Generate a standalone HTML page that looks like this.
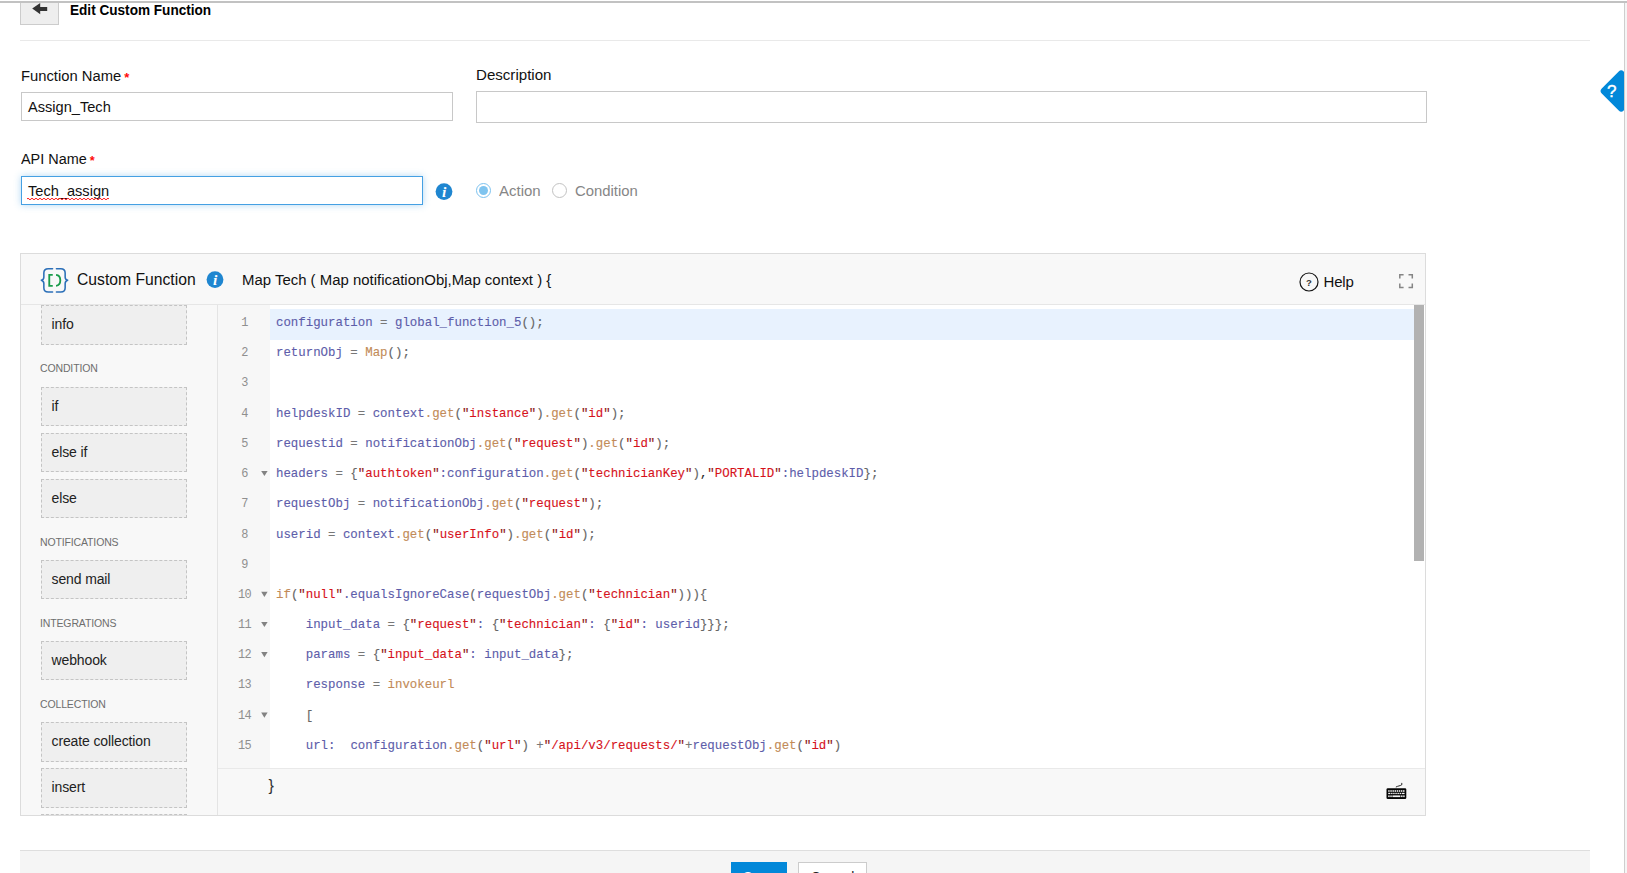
<!DOCTYPE html>
<html lang="en">
<head>
<meta charset="utf-8">
<title>Edit Custom Function</title>
<style>
*{box-sizing:border-box;margin:0;padding:0}
html,body{width:1627px;height:873px;overflow:hidden;background:#fff}
body{position:relative;font-family:"Liberation Sans",Arial,sans-serif;color:#111;font-size:15px}
.abs{position:absolute}
.t{position:absolute;white-space:pre;line-height:20px}
/* top */
#topline{left:0;top:1px;width:1627px;height:2px;background:#c2c2c2;z-index:9}
#rightline{left:1624px;top:3px;width:1px;height:870px;background:#cecece}
#rightline2{left:1625px;top:3px;width:2px;height:870px;background:#f5f5f5}
#back{left:20px;top:1px;width:39px;height:24px;background:#eee;border:1px solid #ccc;overflow:hidden}
#hdiv{left:20px;top:40px;width:1570px;height:1px;background:#e9e9e9}
#title{left:70px;top:0px;font-weight:bold;font-size:15px;letter-spacing:0;color:#000;transform:scaleX(.906);transform-origin:0 50%}
.lbl{font-size:15.3px;letter-spacing:0;color:#111;transform-origin:0 50%}
.req{color:#ff0a0a;font-size:13.5px;font-weight:bold}
.inp{position:absolute;background:#fff;border:1px solid #c8c8c8}
.inp span{position:absolute;left:6px;white-space:pre;font-size:14.6px;line-height:20px;color:#111}
/* panel */
#panel{left:20px;top:253px;width:1406px;height:563px;background:#f8f8f8;border:1px solid #dcdcdc;overflow:hidden}
#phead{left:0;top:0;width:1404px;height:51px;border-bottom:1px solid #e6e6e6;background:#f8f8f8;z-index:5}
#side{left:0;top:51px;width:197px;height:511px;border-right:1px solid #e4e4e4;overflow:hidden}
.blk{position:absolute;left:20px;width:146px;height:39px;background:#efefef;border:1px dashed #c4c4c4;font-size:14px;line-height:36px;padding-left:9.5px;letter-spacing:-0.12px;color:#222;white-space:pre}
.hd{position:absolute;left:19px;font-size:10.5px;line-height:12px;color:#6e6e6e;white-space:pre;letter-spacing:-0.14px}
#gutter{left:197px;top:51px;width:52px;height:463px;background:#f7f7f7}
#code{left:249px;top:51px;width:1144px;height:463px;background:#fff;overflow:hidden}
#vsb{left:1393px;top:51px;width:11px;height:463px;background:#fff}
#thumb{left:0;top:0;width:10px;height:256px;background:#b2b2b2}
#foot{left:197px;top:514px;width:1207px;height:48px;border-top:1px solid #e9e9e9;background:#f8f8f8}
.ln{position:absolute;left:0;width:53px;text-align:center;font-family:"Liberation Mono",monospace;font-size:11.9px;letter-spacing:-0.55px;line-height:30px;height:30px;color:#8f8f8f}
.fold{position:absolute;left:44px;width:0;height:0;border-left:3px solid transparent;border-right:3px solid transparent;border-top:5px solid #8a8a8a}
.cl{position:absolute;left:6px;height:30px;line-height:30px;font-family:"Liberation Mono",monospace;font-size:12.4px;white-space:pre;color:#666;letter-spacing:0;-webkit-text-stroke:0.12px currentColor}
.v{color:#5d5daa}.k{color:#c28b58}.s{color:#d6121b}.q{color:#8e1414}.o{color:#777}.p{color:#666}
#hl{left:0;top:4px;width:1144px;height:30.8px;background:#e8f2fe}
/* bottom bar */
#bbar{left:20px;top:850px;width:1570px;height:23px;background:#f5f5f5;border-top:1px solid #dedede}
#save{left:731px;top:862px;width:56px;height:30px;background:#0288d9;color:#fff;font-size:14px;text-align:center;line-height:31px}
#cancel{left:798px;top:862px;width:69px;height:30px;background:#fff;border:1px solid #ccc;color:#222;font-size:14px;text-align:center;line-height:29px}
</style>
</head>
<body>
<div class="abs" id="topline"></div>
<div class="abs" id="rightline"></div>
<div class="abs" id="rightline2"></div>

<div class="abs" id="back">
<svg class="abs" style="left:0;top:-3px" width="39" height="27" viewBox="0 0 39 27"><polygon points="11.2,9.6 19.2,4 19.2,8 26.2,8 26.2,11.9 19.2,11.9 19.2,15.3" fill="#333"/></svg>
</div>
<div class="t" id="title">Edit Custom Function</div>
<div class="abs" id="hdiv"></div>

<!-- help tab -->
<svg class="abs" style="left:1595px;top:64px" width="29" height="54" viewBox="0 0 29 54"><rect x="10.7" y="11.5" width="31" height="31" rx="3.5" fill="#0288d9" transform="rotate(45 26.2 27)"/><text x="16.8" y="33.4" font-family="Liberation Sans, Arial, sans-serif" font-size="17" fill="#fff" stroke="#fff" stroke-width="0.4" text-anchor="middle">?</text></svg>

<!-- form -->
<div class="t lbl" style="left:20.5px;top:66px;transform:scaleX(.9655)">Function Name <span class="req" style="position:relative;top:1px;left:-1px">*</span></div>
<div class="inp" style="left:21px;top:92px;width:432px;height:29px"><span style="top:4px">Assign_Tech</span></div>
<div class="t lbl" style="left:476.3px;top:65px;transform:scaleX(.986)">Description</div>
<div class="inp" style="left:476px;top:91px;width:951px;height:32px"></div>

<div class="t lbl" style="left:20.5px;top:149px;transform:scaleX(.943)">API Name <span class="req" style="position:relative;top:1px;left:-1px">*</span></div>
<div class="inp" style="left:21px;top:176px;width:402px;height:29px;border-color:#45a0e3;box-shadow:0 0 7px rgba(70,160,227,.42)"><span style="top:4px">Tech_assign</span><svg class="abs" style="left:5px;top:20px" width="84" height="4" viewBox="0 0 84 4"><path d="M0 1.3 Q1 -0.3 2 1.3 T4 1.3 T6 1.3 T8 1.3 T10 1.3 T12 1.3 T14 1.3 T16 1.3 T18 1.3 T20 1.3 T22 1.3 T24 1.3 T26 1.3 T28 1.3 T30 1.3 T32 1.3 T34 1.3 T36 1.3 T38 1.3 T40 1.3 T42 1.3 T44 1.3 T46 1.3 T48 1.3 T50 1.3 T52 1.3 T54 1.3 T56 1.3 T58 1.3 T60 1.3 T62 1.3 T64 1.3 T66 1.3 T68 1.3 T70 1.3 T72 1.3 T74 1.3 T76 1.3 T78 1.3 T80 1.3 T82 1.3" transform="translate(0,0.7)" fill="none" stroke="#ff1a1a" stroke-width="1"/></svg></div>

<svg class="abs" style="left:435.4px;top:182.4px" width="18" height="19" viewBox="0 0 18 19"><circle cx="9" cy="9.6" r="8.4" fill="#1f86d0"/><text x="9.1" y="14.9" font-family="Liberation Serif, serif" font-style="italic" font-weight="bold" font-size="15.5" fill="#fff" text-anchor="middle">i</text></svg>

<div class="abs" style="left:476px;top:183px;width:15px;height:15px;border-radius:50%;border:1.2px solid #7cc2ef;background:#fff"></div>
<div class="abs" style="left:479px;top:186px;width:9px;height:9px;border-radius:50%;background:#7fc4ef"></div>
<div class="t" style="left:499.2px;top:181px;font-size:15.3px;color:#868686;transform:scaleX(.98);transform-origin:0 50%">Action</div>
<div class="abs" style="left:552px;top:183px;width:15px;height:15px;border-radius:50%;border:1px solid #c2c2c2;background:#fff"></div>
<div class="t" style="left:575.2px;top:181px;font-size:15.3px;color:#868686;transform:scaleX(.972);transform-origin:0 50%">Condition</div>

<!-- editor panel -->
<div class="abs" id="panel">
  <div class="abs" id="side">
    <div class="blk" style="top:0px;height:40px">info</div>
    <div class="blk" style="top:82px;height:39px">if</div>
    <div class="blk" style="top:128px;height:39px">else if</div>
    <div class="blk" style="top:174px;height:39px">else</div>
    <div class="blk" style="top:255px;height:39px">send mail</div>
    <div class="blk" style="top:336px;height:39px">webhook</div>
    <div class="blk" style="top:417px;height:40px">create collection</div>
    <div class="blk" style="top:463px;height:40px">insert</div>
    <div class="blk" style="top:509px;height:40px">get</div>
    <div class="hd" style="top:57px">CONDITION</div>
    <div class="hd" style="top:231px">NOTIFICATIONS</div>
    <div class="hd" style="top:312px">INTEGRATIONS</div>
    <div class="hd" style="top:393px">COLLECTION</div>
  </div>
  <div class="abs" id="gutter">
    <div class="ln" style="top:3px">1</div>
    <div class="ln" style="top:33px">2</div>
    <div class="ln" style="top:63px">3</div>
    <div class="ln" style="top:94px">4</div>
    <div class="ln" style="top:124px">5</div>
    <div class="ln" style="top:154px">6</div>
    <div class="ln" style="top:184px">7</div>
    <div class="ln" style="top:215px">8</div>
    <div class="ln" style="top:245px">9</div>
    <div class="ln" style="top:275px">10</div>
    <div class="ln" style="top:305px">11</div>
    <div class="ln" style="top:335px">12</div>
    <div class="ln" style="top:365px">13</div>
    <div class="ln" style="top:396px">14</div>
    <div class="ln" style="top:426px">15</div>
    <div class="ln" style="top:456px">16</div>
  <svg class="abs" style="left:0;top:0" width="52" height="463" viewBox="0 0 52 463" fill="#828282"><polygon points="43.2,165.9 49.6,165.9 46.4,171.1"/><polygon points="43.2,286.7 49.6,286.7 46.4,291.9"/><polygon points="43.2,316.9 49.6,316.9 46.4,322.1"/><polygon points="43.2,347.1 49.6,347.1 46.4,352.3"/><polygon points="43.2,407.5 49.6,407.5 46.4,412.7"/></svg>
  </div>
  <div class="abs" id="code">
    <div class="abs" id="hl"></div>
    <div class="cl" style="top:3px"><span class="v">configuration</span> <span class="o">=</span> <span class="v">global_function_5</span>();</div>
    <div class="cl" style="top:33px"><span class="v">returnObj</span> <span class="o">=</span> <span class="k">Map</span>();</div>
    <div class="cl" style="top:94px"><span class="v">helpdeskID</span> <span class="o">=</span> <span class="v">context</span><span class="k">.get</span>(<span class="q">"</span><span class="s">instance</span><span class="q">"</span>)<span class="k">.get</span>(<span class="q">"</span><span class="s">id</span><span class="q">"</span>);</div>
    <div class="cl" style="top:124px"><span class="v">requestid</span> <span class="o">=</span> <span class="v">notificationObj</span><span class="k">.get</span>(<span class="q">"</span><span class="s">request</span><span class="q">"</span>)<span class="k">.get</span>(<span class="q">"</span><span class="s">id</span><span class="q">"</span>);</div>
    <div class="cl" style="top:154px"><span class="v">headers</span> <span class="o">=</span> {<span class="q">"</span><span class="s">authtoken</span><span class="q">"</span><span class="v">:configuration</span><span class="k">.get</span>(<span class="q">"</span><span class="s">technicianKey</span><span class="q">"</span>)<span style="color:#222">,</span><span class="q">"</span><span class="s">PORTALID</span><span class="q">"</span><span class="v">:helpdeskID</span>};</div>
    <div class="cl" style="top:184px"><span class="v">requestObj</span> <span class="o">=</span> <span class="v">notificationObj</span><span class="k">.get</span>(<span class="q">"</span><span class="s">request</span><span class="q">"</span>);</div>
    <div class="cl" style="top:215px"><span class="v">userid</span> <span class="o">=</span> <span class="v">context</span><span class="k">.get</span>(<span class="q">"</span><span class="s">userInfo</span><span class="q">"</span>)<span class="k">.get</span>(<span class="q">"</span><span class="s">id</span><span class="q">"</span>);</div>
    <div class="cl" style="top:275px"><span class="k">if</span>(<span class="q">"</span><span class="s">null</span><span class="q">"</span><span class="v">.equalsIgnoreCase</span>(<span class="v">requestObj</span><span class="k">.get</span>(<span class="q">"</span><span class="s">technician</span><span class="q">"</span>))){</div>
    <div class="cl" style="top:305px">    <span class="v">input_data</span> <span class="o">=</span> {<span class="q">"</span><span class="s">request</span><span class="q">"</span><span class="v">:</span> {<span class="q">"</span><span class="s">technician</span><span class="q">"</span><span class="v">:</span> {<span class="q">"</span><span class="s">id</span><span class="q">"</span><span class="v">:</span> <span class="v">userid</span>}}};</div>
    <div class="cl" style="top:335px">    <span class="v">params</span> <span class="o">=</span> {<span class="q">"</span><span class="s">input_data</span><span class="q">"</span><span class="v">:</span> <span class="v">input_data</span>};</div>
    <div class="cl" style="top:365px">    <span class="v">response</span> <span class="o">=</span> <span class="k">invokeurl</span></div>
    <div class="cl" style="top:396px">    [</div>
    <div class="cl" style="top:426px">    <span class="v">url:</span>  <span class="v">configuration</span><span class="k">.get</span>(<span class="q">"</span><span class="s">url</span><span class="q">"</span>) <span class="o">+</span><span class="q">"</span><span class="s">/api/v3/requests/</span><span class="q">"</span><span class="o">+</span><span class="v">requestObj</span><span class="k">.get</span>(<span class="q">"</span><span class="s">id</span><span class="q">"</span>)</div>
    <div class="cl" style="top:456px">    <span class="v">type:</span> <span class="v">PUT</span></div>
  </div>
  <div class="abs" id="vsb"><div class="abs" id="thumb"></div></div>
  <div class="abs" id="foot">
    <div class="t" style="left:50.5px;top:7px;font-size:16px;color:#333">}</div>
    <svg class="abs" style="left:1166px;top:13px" width="26" height="20" viewBox="0 0 26 20"><path d="M12.2 4.9 Q13.6 4.2 15 3.9 T17.7 2.9 Q18 2.2 17.8 1.3" stroke="#111" stroke-width="0.9" fill="none" stroke-linecap="round"/><rect x="2.5" y="6.2" width="19.8" height="10.8" rx="1.3" fill="#050505"/><g fill="#f4f4f4"><rect x="4.20" y="8.2" width="1.45" height="1.6"/><rect x="6.32" y="8.2" width="1.45" height="1.6"/><rect x="8.44" y="8.2" width="1.45" height="1.6"/><rect x="10.56" y="8.2" width="1.45" height="1.6"/><rect x="12.68" y="8.2" width="1.45" height="1.6"/><rect x="14.80" y="8.2" width="1.45" height="1.6"/><rect x="16.92" y="8.2" width="1.45" height="1.6"/><rect x="19.04" y="8.2" width="1.45" height="1.6"/><rect x="4.2" y="10.8" width="2.2" height="1.3"/><rect x="7.10" y="10.8" width="1.45" height="1.3"/><rect x="9.22" y="10.8" width="1.45" height="1.3"/><rect x="11.34" y="10.8" width="1.45" height="1.3"/><rect x="13.46" y="10.8" width="1.45" height="1.3"/><rect x="15.58" y="10.8" width="1.45" height="1.3"/><rect x="17.7" y="10.8" width="2.9" height="1.3"/><rect x="4.2" y="13.4" width="1.45" height="1.7"/><rect x="6.3" y="13.4" width="1.45" height="1.7"/><rect x="8.4" y="13.4" width="8.0" height="1.7"/><rect x="17.1" y="13.4" width="1.45" height="1.7"/><rect x="19.2" y="13.4" width="1.45" height="1.7"/></g></svg>
  </div>
  <div class="abs" id="phead">
    <svg class="abs" style="left:17.5px;top:11.9px" width="31" height="28.7" viewBox="0 0 32 30" preserveAspectRatio="none">
      <g fill="none" stroke="#2b6fb8" stroke-width="1.6" stroke-linecap="round" stroke-linejoin="round">
        <path d="M14 2.8 H9.5 Q5 2.8 5 7.3 V11.8 Q5 14.2 2.4 15 Q5 15.8 5 18.2 V22.7 Q5 27.2 9.5 27.2 H14"/>
        <path d="M18 2.8 H22.5 Q27 2.8 27 7.3 V11.8 Q27 14.2 29.6 15 Q27 15.8 27 18.2 V22.7 Q27 27.2 22.5 27.2 H18"/>
      </g>
      <g fill="none" stroke="#1a9c4b" stroke-width="1.9" stroke-linecap="butt" stroke-linejoin="miter">
        <path d="M14.2 9.2 H10.6 V20.8 H14.2"/>
        <path d="M17.6 9.2 Q22 9.6 22 15 Q22 20.4 17.6 20.8"/>
      </g>
    </svg>
    <div class="t" style="left:56px;top:16.4px;font-size:16.6px;color:#111;transform:scaleX(.946);transform-origin:0 50%">Custom Function</div>
    <svg class="abs" style="left:185.3px;top:15.6px" width="18" height="19" viewBox="0 0 18 19"><circle cx="9" cy="9.6" r="8.4" fill="#1f86d0"/><text x="9.1" y="14.9" font-family="Liberation Serif, serif" font-style="italic" font-weight="bold" font-size="15.5" fill="#fff" text-anchor="middle">i</text></svg>
    <div class="t" style="left:221px;top:16px;font-size:15.3px;color:#111;transform:scaleX(.976);transform-origin:0 50%">Map Tech ( Map notificationObj,Map context ) {</div>
    <svg class="abs" style="left:1277px;top:17px" width="22" height="22" viewBox="0 0 22 22"><circle cx="11" cy="11" r="9" fill="none" stroke="#151515" stroke-width="1.2"/><text x="11" y="14.8" font-family="Liberation Sans, Arial, sans-serif" font-weight="bold" font-size="9.5" fill="#333" text-anchor="middle">?</text></svg>
    <div class="t" style="left:1302.5px;top:17.7px;font-size:15px;letter-spacing:-0.2px;color:#111">Help</div>
    <svg class="abs" style="left:1377px;top:19px" width="18" height="18" viewBox="0 0 18 18"><path d="M1.8 5.6 V1.8 H5.6 M10.5 1.8 H14.3 V5.6 M14.3 10.6 V14.4 H10.5 M5.6 14.4 H1.8 V10.6" fill="none" stroke="#858585" stroke-width="1.5"/></svg>
  </div>
</div>

<!-- bottom bar -->
<div class="abs" id="bbar"></div>
<div class="abs" id="save">Save</div>
<div class="abs" id="cancel">Cancel</div>
</body>
</html>
